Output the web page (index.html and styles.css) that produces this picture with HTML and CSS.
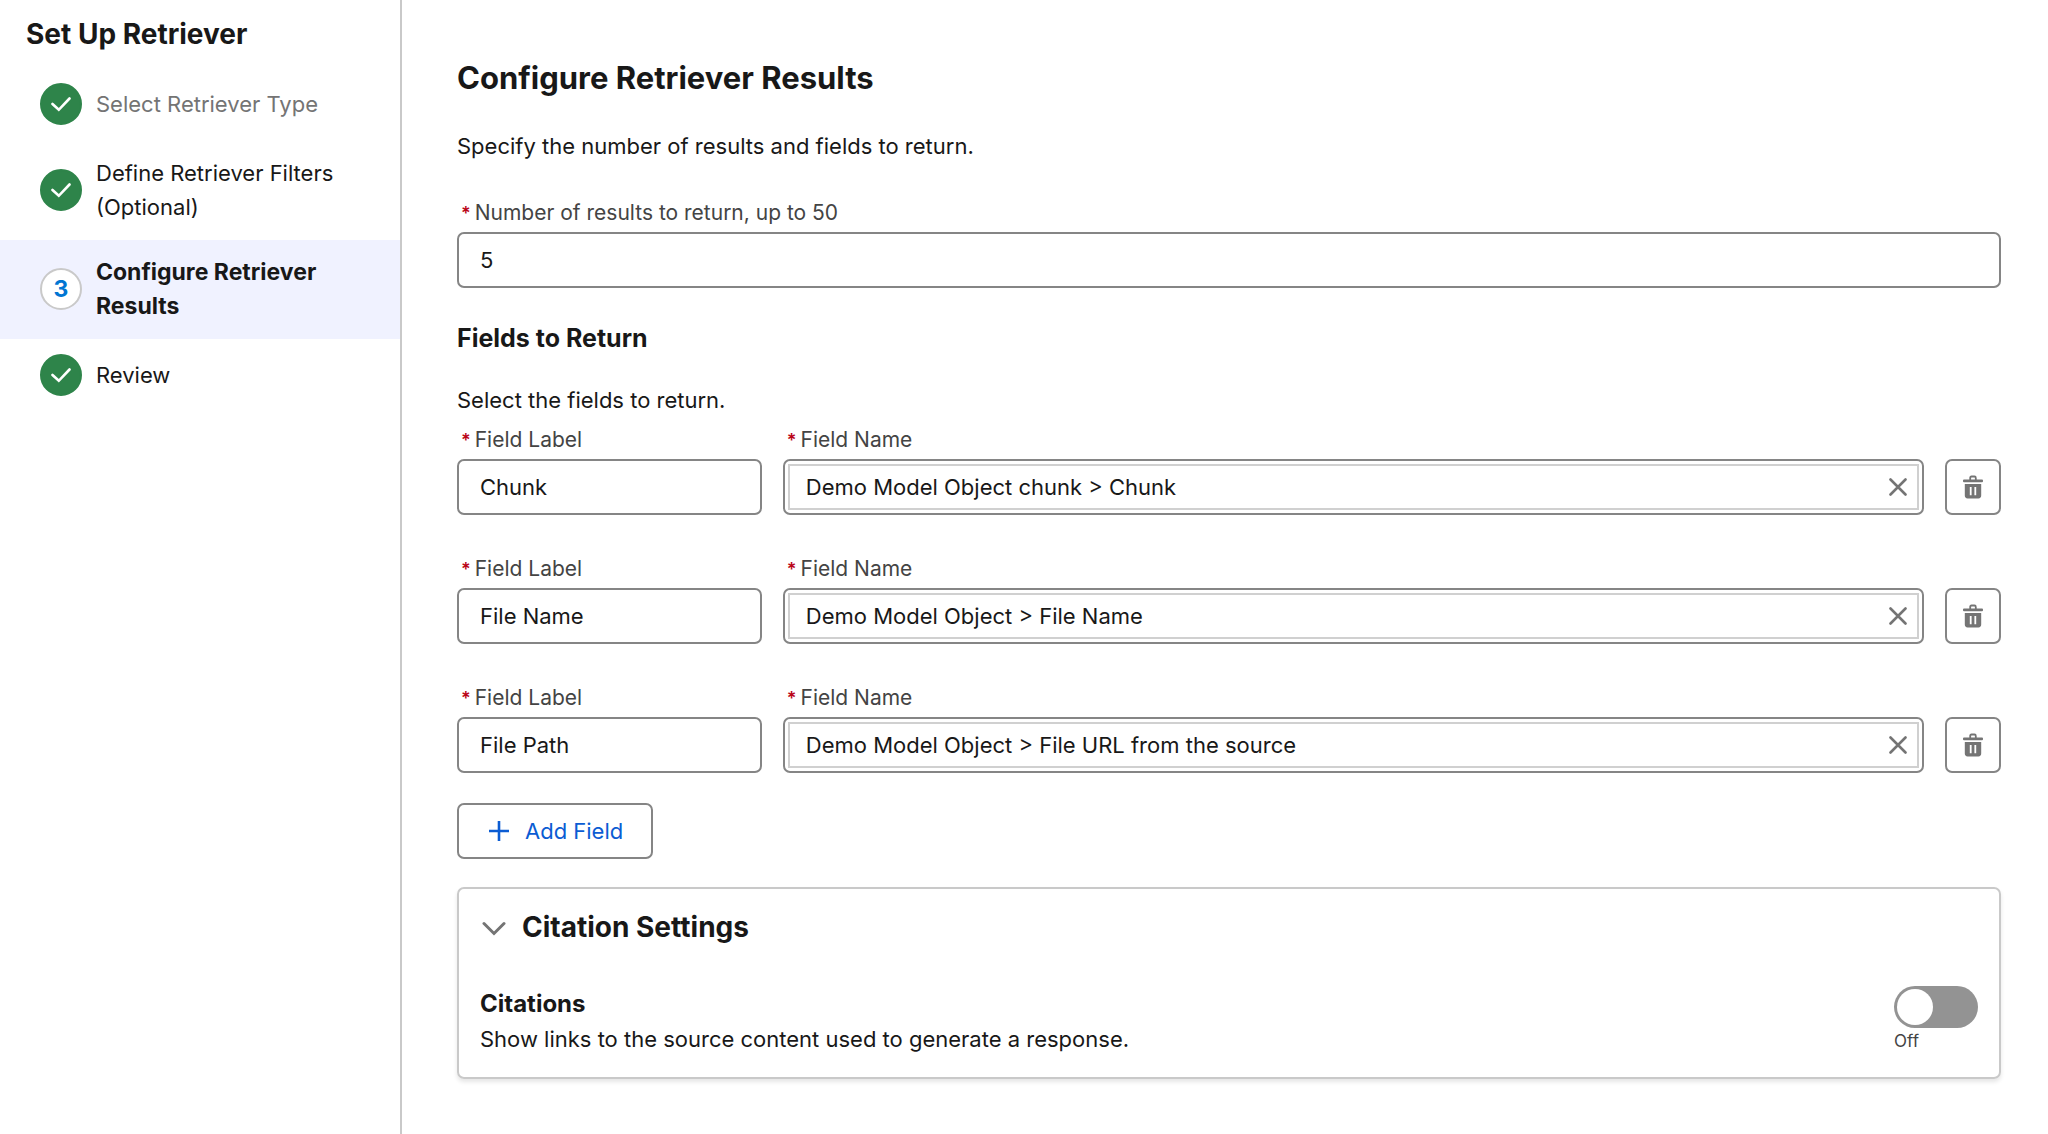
FILE: index.html
```html
<!DOCTYPE html>
<html lang="en">
<head>
  <meta charset="UTF-8">
  <meta name="viewport" content="width=device-width, initial-scale=1.0">
  <title>Set Up Retriever</title>
  <link rel="stylesheet" href="styles.css">
</head>
<body>
  <!-- shared icons -->
  <svg class="sprite" aria-hidden="true">
    <symbol id="icon-check" viewBox="0 0 20 20">
      <path d="M1.5 10 L7.8 15.8 L18.5 4.5" fill="none" stroke="currentColor" stroke-width="2.6" stroke-linecap="round"/>
    </symbol>
    <symbol id="icon-close" viewBox="0 0 18 18">
      <path d="M1.5 1.5 L16.5 16.5 M16.5 1.5 L1.5 16.5" fill="none" stroke="currentColor" stroke-width="2.6" stroke-linecap="round"/>
    </symbol>
    <symbol id="icon-delete" viewBox="0 0 20 24">
      <path d="M7.2 5 V3 Q7.2 1.5 8.5 1.5 H11.5 Q12.8 1.5 12.8 3 V5" fill="none" stroke="currentColor" stroke-width="1.8"/>
      <rect x="0" y="4.6" width="20" height="2.6" rx="1" fill="currentColor"/>
      <path fill-rule="evenodd" fill="currentColor" d="M1.8 9 H18.2 V20.6 Q18.2 23.4 15.4 23.4 H4.6 Q1.8 23.4 1.8 20.6 Z M6.8 12 V20.2 H8.6 V12 Z M11.4 12 V20.2 H13.2 V12 Z"/>
    </symbol>
  </svg>

  <div class="wizard">
    <nav class="sidebar" aria-label="Steps">
      <h2>Set Up Retriever</h2>
      <ol class="steps">
        <li class="step muted">
          <span class="marker done"><svg><use href="#icon-check"/></svg></span>
          <span class="step-name">Select Retriever Type</span>
        </li>
        <li class="step">
          <span class="marker done"><svg><use href="#icon-check"/></svg></span>
          <span class="step-name">Define Retriever Filters (Optional)</span>
        </li>
        <li class="step active" aria-current="step">
          <span class="marker">3</span>
          <span class="step-name">Configure Retriever Results</span>
        </li>
        <li class="step">
          <span class="marker done"><svg><use href="#icon-check"/></svg></span>
          <span class="step-name">Review</span>
        </li>
      </ol>
    </nav>

    <main class="content">
      <h1>Configure Retriever Results</h1>
      <p class="intro">Specify the number of results and fields to return.</p>

      <div class="field">
        <label for="count"><abbr>*</abbr>Number of results to return, up to 50</label>
        <input class="box" type="text" id="count" value="5">
      </div>

      <h3>Fields to Return</h3>
      <p class="hint">Select the fields to return.</p>

      <div class="rows">
        <div class="row">
          <div class="field">
            <label for="label1"><abbr>*</abbr>Field Label</label>
            <input class="box" type="text" id="label1" value="Chunk">
          </div>
          <div class="field">
            <label for="name1"><abbr>*</abbr>Field Name</label>
            <div class="box picker">
              <div class="picker-inner">
                <input type="text" id="name1" value="Demo Model Object chunk &gt; Chunk">
                <button type="button" class="clear" aria-label="Clear"><svg><use href="#icon-close"/></svg></button>
              </div>
            </div>
          </div>
          <button type="button" class="box delete" aria-label="Delete"><svg><use href="#icon-delete"/></svg></button>
        </div>

        <div class="row">
          <div class="field">
            <label for="label2"><abbr>*</abbr>Field Label</label>
            <input class="box" type="text" id="label2" value="File Name">
          </div>
          <div class="field">
            <label for="name2"><abbr>*</abbr>Field Name</label>
            <div class="box picker">
              <div class="picker-inner">
                <input type="text" id="name2" value="Demo Model Object &gt; File Name">
                <button type="button" class="clear" aria-label="Clear"><svg><use href="#icon-close"/></svg></button>
              </div>
            </div>
          </div>
          <button type="button" class="box delete" aria-label="Delete"><svg><use href="#icon-delete"/></svg></button>
        </div>

        <div class="row">
          <div class="field">
            <label for="label3"><abbr>*</abbr>Field Label</label>
            <input class="box" type="text" id="label3" value="File Path">
          </div>
          <div class="field">
            <label for="name3"><abbr>*</abbr>Field Name</label>
            <div class="box picker">
              <div class="picker-inner">
                <input type="text" id="name3" value="Demo Model Object &gt; File URL from the source">
                <button type="button" class="clear" aria-label="Clear"><svg><use href="#icon-close"/></svg></button>
              </div>
            </div>
          </div>
          <button type="button" class="box delete" aria-label="Delete"><svg><use href="#icon-delete"/></svg></button>
        </div>
      </div>

      <button type="button" class="box add">
        <svg viewBox="0 0 20 20"><path d="M10 0 V20 M0 10 H20" fill="none" stroke="currentColor" stroke-width="2.6"/></svg>
        Add Field
      </button>

      <section class="card">
        <button type="button" class="card-toggle" aria-expanded="true">
          <svg viewBox="0 -4 24 18"><path d="M2 1.5 L12 11.5 L22 1.5" fill="none" stroke="currentColor" stroke-width="3" stroke-linecap="round"/></svg>
          Citation Settings
        </button>
        <div class="setting">
          <div>
            <h4>Citations</h4>
            <p>Show links to the source content used to generate a response.</p>
          </div>
          <label class="switch">
            <input type="checkbox" role="switch" aria-label="Citations">
            <span>Off</span>
          </label>
        </div>
      </section>
    </main>
  </div>
</body>
</html>
```

FILE: styles.css
```css
* {
  box-sizing: border-box;
}
body {
  margin: 0;
  background: #fff;
  color: #181818;
  font-family: Inter, "Liberation Sans", sans-serif;
  font-size: 22px;
  line-height: 34px;
}
h1, h2, h3, h4, p, ol {
  margin: 0;
  padding: 0;
}
input, button {
  font: inherit;
  color: inherit;
}
button {
  cursor: pointer;
}
.sprite {
  display: none;
}
.wizard {
  display: flex;
  min-height: 100vh;
}

/* sidebar */
.sidebar {
  flex: 0 0 402px;
  border-right: 2px solid #c9c9c9;
}
.sidebar h2 {
  padding: 17px 26px;
  font-size: 28px;
}
.steps {
  list-style: none;
}
.step {
  display: flex;
  align-items: center;
  gap: 14px;
  padding: 15px 40px 16px;
}
.step.muted {
  color: #747474;
}
.step.active {
  background: #f0f2ff;
  font-size: 23px;
  font-weight: 700;
}
.marker {
  display: flex;
  flex: none;
  align-items: center;
  justify-content: center;
  width: 42px;
  height: 42px;
  border: 2px solid #c9c9c9;
  border-radius: 50%;
  background: #fff;
  color: #0176d3;
}
.marker.done {
  border-color: #2e844a;
  background: #2e844a;
  color: #fff;
}
.marker svg {
  width: 20px;
  height: 20px;
}

/* main form */
.content {
  flex: 1;
  min-width: 0;
  padding: 61px 47px 55px 55px;
}
h1 {
  font-size: 31px;
}
.intro {
  margin: 34px 0 33px;
}
.field label {
  display: block;
  padding-left: 4px;
  margin-bottom: 2px;
  color: #444;
  font-size: 21px;
}
.field abbr {
  margin-right: 4px;
  color: #ba0517;
  font-size: 18px;
  font-weight: 600;
  line-height: 1;
}
.box {
  display: block;
  width: 100%;
  height: 56px;
  border: 2px solid #858585;
  border-radius: 7px;
  background: #fff;
}
input.box {
  padding: 0 21px;
}
h3, h4 {
  font-size: 24px;
}
h3 {
  margin: 33px 0 28px;
  font-size: 25px;
}
.hint {
  margin-bottom: 6px;
}
.rows {
  display: grid;
  gap: 37px;
}
.row {
  display: grid;
  grid-template-columns: 305fr 1142fr 56px;
  gap: 21px;
  align-items: end;
}
.picker {
  padding: 3px;
}
.picker-inner {
  display: flex;
  align-items: center;
  height: 100%;
  border: 2px solid #d0d0d0;
}
.picker input {
  flex: 1;
  min-width: 0;
  padding: 0 16px;
  border: 0;
  background: none;
}
.clear {
  display: flex;
  padding: 10px;
  border: 0;
  background: none;
  color: #747474;
}
.clear svg {
  width: 18px;
  height: 18px;
}
.delete {
  display: flex;
  align-items: center;
  justify-content: center;
  padding: 0;
  color: #747474;
}
.delete svg {
  width: 20px;
  height: 24px;
}
.add {
  display: flex;
  align-items: center;
  gap: 16px;
  width: auto;
  margin: 30px 0 28px;
  padding: 0 28px 0 30px;
  color: #0b5cd3;
}
.add svg {
  width: 20px;
  height: 20px;
}

/* citation card */
.card {
  padding: 21px;
  border: 2px solid #c9c9c9;
  border-radius: 7px;
  box-shadow: 0 3px 4px rgba(0, 0, 0, 0.1);
}
.card-toggle {
  display: flex;
  align-items: center;
  gap: 16px;
  padding: 0 2px;
  border: 0;
  background: none;
  font-size: 28px;
  font-weight: 700;
}
.card-toggle svg {
  width: 24px;
  height: 18px;
  color: #747474;
}
.setting {
  display: flex;
  justify-content: space-between;
  margin-top: 42px;
}
h4 {
  margin: 1px 0;
}
.switch {
  display: grid;
  align-content: start;
  color: #444;
  font-size: 17px;
  line-height: 26px;
}
.switch input {
  appearance: none;
  width: 84px;
  height: 42px;
  margin: 0;
  padding: 3px;
  border-radius: 21px;
  background: #939393;
}
.switch input::before {
  content: "";
  display: block;
  width: 36px;
  height: 36px;
  border-radius: 50%;
  background: #fff;
}
.switch input:checked {
  background: #0176d3;
}
.switch input:checked::before {
  margin-left: auto;
}
```
